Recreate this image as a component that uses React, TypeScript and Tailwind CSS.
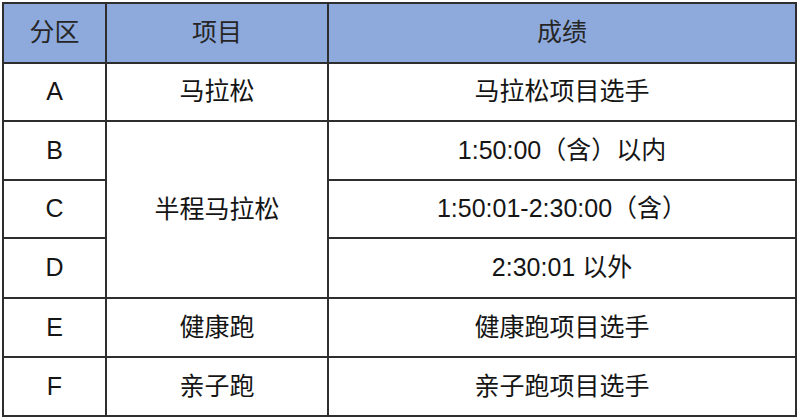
import React from "react";

const rows: { zone: string; project?: string; span?: number; score: string }[] = [
  { zone: "A", project: "马拉松", score: "马拉松项目选手" },
  { zone: "B", project: "半程马拉松", span: 3, score: "1:50:00（含）以内" },
  { zone: "C", score: "1:50:01-2:30:00（含）" },
  { zone: "D", score: "2:30:01 以外" },
  { zone: "E", project: "健康跑", score: "健康跑项目选手" },
  { zone: "F", project: "亲子跑", score: "亲子跑项目选手" },
];

const heights = ["h-[58px]", "h-[59px]", "h-[58px]", "h-[60px]", "h-[59px]", "h-[59px]"];

export default function App() {
  return (
    <div
      className="w-[800px] h-[418px] bg-white pt-[2px] pl-[2px]"
      style={{ fontFamily: '"Liberation Sans", "Noto Sans CJK SC", sans-serif' }}
    >
      <table className="table-fixed border-collapse text-[25px] text-[#151515] w-[793px]">
        <colgroup>
          <col className="w-[103px]" />
          <col className="w-[222px]" />
          <col className="w-[468px]" />
        </colgroup>
        <thead>
          <tr className="h-[60px] bg-[#8eaadc] text-[#262626]">
            <th className="border-2 border-[#2e2e2e] font-normal text-center">分区</th>
            <th className="border-2 border-[#2e2e2e] font-normal text-center">项目</th>
            <th className="border-2 border-[#2e2e2e] font-normal text-center">成绩</th>
          </tr>
        </thead>
        <tbody>
          {rows.map((r, i) => (
            <tr key={r.zone} className={heights[i]}>
              <td className="border-2 border-[#2e2e2e] text-center">{r.zone}</td>
              {r.project !== undefined && (
                <td rowSpan={r.span ?? 1} className="border-2 border-[#2e2e2e] text-center">
                  {r.project}
                </td>
              )}
              <td className="border-2 border-[#2e2e2e] text-center">{r.score}</td>
            </tr>
          ))}
        </tbody>
      </table>
    </div>
  );
}
